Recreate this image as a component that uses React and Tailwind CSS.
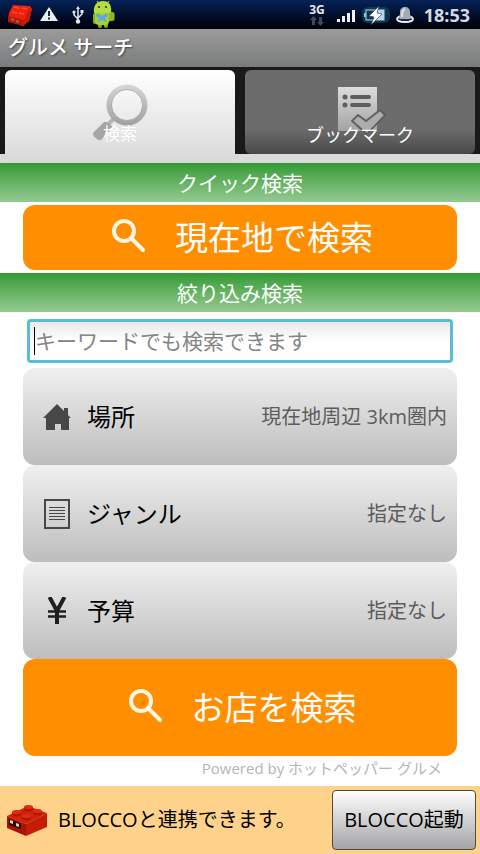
// App.jsx
import React, { useState } from 'react';

const AndroidIcon = () => (
  <svg width="26" height="29" viewBox="0 0 26 29" aria-hidden="true">
    <path d="M7 4L5 1M15 4L17 1" stroke="#9cc52c" strokeWidth="1.2" />
    <rect x="6" y="20" width="4" height="8" rx="2" fill="#86ad1f" />
    <rect x="12" y="20" width="4" height="8" rx="2" fill="#86ad1f" />
    <path d="M16 12l6 1v7l-5 1z" fill="#8fb526" stroke="#8fb526" strokeLinejoin="round" />
    <rect x="1" y="13" width="4" height="11" rx="2" fill="#86ad1f" />
    <rect x="3" y="10" width="14" height="15" rx="4" fill="#a8d033" />
    <path d="M2 13C1 5 5 1 11 1s9 4 8 12z" fill="#b5dc42" />
    <circle cx="7" cy="7" r="1.1" fill="#31420d" />
    <circle cx="14" cy="7" r="1.1" fill="#31420d" />
    <path d="M5 13l5 3 5-3 1 3-3 2 2 4-5-2-5 2 2-4-3-2z" fill="#5fa6e8" />
  </svg>
);

const StatusBrickIcon = () => (
  <svg width="26" height="26" viewBox="0 0 26 26" aria-hidden="true">
    <path d="M7 3l17 1 2 3-3 12-6 5L2 18l1-7z" fill="#f0200e" />
    <path d="M2 14l16 4-1 6-15-4z" fill="#b51709" />
    <path d="M18 18l6-12 2 1-3 12-6 5z" fill="#c81a0b" />
    <path d="M8 5l5 1M16 6l5 1M6 10l5 1M13 11l5 1" stroke="#ff4a34" strokeWidth="1.500" />
    <path d="M5 17l3 1M10 19l3 1" stroke="#8a7a35" strokeWidth="2" />
  </svg>
);

const WarningIcon = () => (
  <svg width="18" height="15" viewBox="0 0 18 15" aria-hidden="true">
    <path d="M9 0l9 14H0z" fill="#e8eef4" />
    <path d="M9 4v5M9 10.5v2" stroke="#14233f" strokeWidth="2" />
  </svg>
);

const UsbIcon = () => (
  <svg width="12" height="18" viewBox="0 0 12 18" fill="none" stroke="#dfe7f0" strokeWidth="1.500" aria-hidden="true">
    <path d="M6 2v13M2 6v3l4 4M10 6v2l-4 4" />
    <path d="M6 0l2 3H4z" fill="#dfe7f0" stroke="none" />
    <circle cx="6" cy="15.500" r="2.200" fill="#dfe7f0" stroke="none" />
    <circle cx="2" cy="6" r="1.600" fill="#dfe7f0" stroke="none" />
    <path d="M8.500 4h3v3h-3z" fill="#dfe7f0" stroke="none" />
  </svg>
);

const DataArrowsIcon = () => (
  <svg width="14" height="10" viewBox="0 0 14 10" fill="#3f4858" aria-hidden="true">
    <path d="M3.500 0L7 4H5v5H2V4H0z" />
    <path d="M10.500 10L14 6h-2V1H9v5H7z" />
  </svg>
);

const SignalIcon = () => (
  <svg width="19" height="14" viewBox="0 0 19 14" fill="#eef2f7" aria-hidden="true">
    <path d="M0 11h3v3H0zM5 8h3v6H5zM10 5h3v9h-3zM15 2h3v12h-3z" />
  </svg>
);

const BatteryIcon = () => (
  <svg width="28" height="22" viewBox="0 0 28 22" aria-hidden="true">
    <rect x="0" y="3" width="28" height="16" rx="6" fill="#1d5a78" opacity="0.500" />
    <rect x="4" y="6" width="18" height="10" fill="#14344f" stroke="#8cc8cc" strokeWidth="1.200" />
    <path d="M14 6h8v10h-8z" fill="#b9d4e8" />
    <path d="M2 9h2v4H2z" fill="#8cc8cc" />
    <path d="M17 2L7 12l5 1-3 8 11-11-5-1z" fill="#ffffff" stroke="#1b3350" strokeWidth="0.600" />
  </svg>
);

const BellIcon = () => (
  <svg width="18" height="18" viewBox="0 0 18 18" aria-hidden="true">
    <ellipse cx="9" cy="13" rx="8" ry="3" fill="#0b1730" stroke="#eef1f4" strokeWidth="1.800" />
    <path d="M2 12c2-2 2-3 2-6 0-3 2-5 5-5s5 2 5 5c0 3 0 4 2 6-3 2-11 2-14 0z" fill="#a6abb2" />
    <path d="M6 11c0-4 0-7 3-8" stroke="#dfe2e6" strokeWidth="2" fill="none" />
    <path d="M5 14h8" stroke="#10203c" strokeWidth="1.500" />
  </svg>
);

const TabSearchIcon = () => (
  <svg width="56" height="58" viewBox="0 0 56 58" aria-hidden="true">
    <defs>
      <linearGradient id="ring" x1="0" y1="0" x2="0" y2="1">
        <stop offset="0" stopColor="#d4d4d4" />
        <stop offset="1" stopColor="#a3a3a3" />
      </linearGradient>
    </defs>
    <path d="M22 34l-6 7" stroke="#b4b4b4" strokeWidth="4" />
    <path d="M15 38l6 5-12 13c-3 1-9-4-8-7l11-11z" fill="#a6a6a6" />
    <circle cx="35" cy="21" r="18" fill="none" stroke="url(#ring)" strokeWidth="5" />
    <circle cx="35" cy="21" r="15.500" fill="none" stroke="#9a9a9a" strokeWidth="0.700" />
  </svg>
);

const TabBookmarkIcon = () => (
  <svg width="48" height="48" viewBox="0 0 48 48" aria-hidden="true">
    <defs>
      <linearGradient id="sheet" x1="0" y1="0" x2="0" y2="1">
        <stop offset="0" stopColor="#dcdcdc" />
        <stop offset="1" stopColor="#a2a2a2" />
      </linearGradient>
    </defs>
    <path d="M0 0h39v44H0z" fill="url(#sheet)" />
    <circle cx="7" cy="10" r="2.500" fill="#5e5e5e" />
    <circle cx="7" cy="18" r="2.500" fill="#5e5e5e" />
    <path d="M14 10h17M14 18h17" stroke="#5e5e5e" strokeWidth="4" strokeLinecap="round" />
    <path d="M14 34l6-6 8 6 14-11 5 5-18 19z" fill="#acacac" stroke="#5c5d5c" strokeWidth="1.800" strokeLinejoin="round" />
  </svg>
);

const SearchIcon = () => (
  <svg className="mb-1 shrink-0" width="36" height="36" viewBox="0 0 36 36" fill="none" stroke="#fff6e8" aria-hidden="true">
    <circle cx="13" cy="13" r="10" strokeWidth="4" />
    <path d="M20 20l12 12" strokeWidth="4" strokeLinecap="round" />
  </svg>
);

const HomeIcon = () => (
  <svg width="28" height="26" viewBox="0 0 28 26" fill="#474747" aria-hidden="true">
    <path d="M14 0l7 7V4h4v7l3 3h-2v12h-8v-6h-6v6H3V14H0z" />
  </svg>
);

const ListIcon = () => (
  <svg width="26" height="30" viewBox="0 0 26 30" fill="none" stroke="#474747" aria-hidden="true">
    <rect x="1" y="1" width="24" height="28" strokeWidth="2" />
    <path d="M5 8.500h16M5 11.500h16M5 14.500h16M5 17.500h16M5 20.500h16" strokeWidth="1" />
  </svg>
);

const YenIcon = () => (
  <svg width="20" height="27" viewBox="0 0 20 27" fill="none" stroke="#1f1f1f" aria-hidden="true">
    <path d="M2.500 0L10 14L17.500 0" strokeWidth="4" />
    <path d="M10 12v15" strokeWidth="4" />
    <path d="M1 14.500h18M1 19.500h18" strokeWidth="2.500" />
  </svg>
);

const BrickIcon = () => (
  <svg className="shrink-0" width="42" height="32" viewBox="0 0 42 32" aria-hidden="true">
    <path d="M1 12L22 2l19 7-21 11z" fill="#d42208" />
    <path d="M1 12l19 8v12L1 24z" fill="#a81306" />
    <path d="M20 20L41 9v14L20 32z" fill="#c41c05" />
    <path d="M6 8h9v3c-2 2-7 2-9 0zM18 3h9v3c-2 2-7 2-9 0zM16 12h9v3c-2 2-7 2-9 0zM27 7h9v3c-2 2-7 2-9 0z" fill="#b01804" />
    <g fill="#e02b10">
      <ellipse cx="10.500" cy="8" rx="4.500" ry="2" />
      <ellipse cx="22.500" cy="3" rx="4.500" ry="2" />
      <ellipse cx="20.500" cy="12" rx="4.500" ry="2" />
      <ellipse cx="31.500" cy="7" rx="4.500" ry="2" />
    </g>
    <path d="M3 15l12 5v5L3 21z" fill="#2b0e0b" />
    <path d="M4 16l3 1v3l-3-1zM10 19l3 1v3l-3-1z" fill="#e0cfc4" />
  </svg>
);

const tabs = [
  { id: 'search', label: '検索', icon: <TabSearchIcon /> },
  { id: 'bookmark', label: 'ブックマーク', icon: <TabBookmarkIcon /> }
];

const filters = [
  { id: 'place', label: '場所', value: '現在地周辺 3km圏内', icon: <HomeIcon /> },
  { id: 'genre', label: 'ジャンル', value: '指定なし', icon: <ListIcon /> },
  { id: 'budget', label: '予算', value: '指定なし', icon: <YenIcon /> }
];

const SectionTitle = ({ children }) => (
  <h2 className="flex h-[39px] items-center justify-center bg-linear-to-b from-[#2f9a31] to-[#94ca92] text-[21px] leading-6 text-white">
    {children}
  </h2>
);

const App = () => {
  const [activeTab, setActiveTab] = useState('search');
  const [keyword, setKeyword] = useState('');

  return (
    <div className="flex min-h-screen flex-col bg-white font-['Open_Sans','Noto_Sans_CJK_JP',sans-serif]" lang="ja">
      {/* Status bar */}
      <div className="flex h-[29px] items-center justify-between bg-linear-to-b from-[#06235a] to-[#000209] pr-2.5 pl-1.5">
        <div className="flex items-center">
          <StatusBrickIcon />
          <span className="ml-2"><WarningIcon /></span>
          <span className="ml-3.5"><UsbIcon /></span>
          <span className="ml-2"><AndroidIcon /></span>
        </div>
        <div className="flex items-center">
          <div className="flex flex-col items-center">
            <span className="text-[12px] leading-3 font-bold text-[#e4e9f0]">3G</span>
            <DataArrowsIcon />
          </div>
          <span className="ml-3"><SignalIcon /></span>
          <span className="ml-1.5"><BatteryIcon /></span>
          <span className="ml-1.5"><BellIcon /></span>
          <span className="ml-2.5 text-[18px] leading-6 font-bold text-[#d3dae3]">18:53</span>
        </div>
      </div>

      {/* Title bar */}
      <header className="flex h-[38px] items-center bg-linear-to-b from-[#9b9c9a] to-[#7a7b7d] px-2">
        <h1 className="text-[20px] leading-6 font-medium text-white text-shadow-[1px_1px_2px_#444444]">グルメ サーチ</h1>
      </header>

      {/* Tabs */}
      <div role="tablist" className="grid grid-cols-2 bg-linear-to-b from-[#181a19] from-[87px] to-[#dbdbdb] to-[87px] pt-[3px]">
        {tabs.map((tab) => (
          <div key={tab.id} className="px-[5px]">
            <button
              type="button"
              role="tab"
              aria-selected={activeTab === tab.id}
              onClick={() => setActiveTab(tab.id)}
              className={
                activeTab === tab.id
                  ? 'flex h-[93px] w-full flex-col items-center rounded-t-md bg-linear-to-b from-white to-[#d8d8d8] pt-3.5'
                  : 'mb-[9px] flex h-[84px] w-full flex-col items-center rounded-md bg-linear-to-b from-[#6b6c6b] from-70% to-[#4a4a4a] pt-[17px]'
              }
            >
              <span className={activeTab === tab.id ? 'flex h-10 justify-center' : 'flex h-10 justify-center pl-1'}>{tab.icon}</span>
              <span className={activeTab === tab.id ? 'relative text-[17px] leading-5 text-white' : 'relative -mt-0.5 text-[18px] leading-5 text-white'}>
                {tab.label}
              </span>
            </button>
          </div>
        ))}
      </div>

      <main className="flex-1">
        <SectionTitle>クイック検索</SectionTitle>
        <div className="px-[23px] py-[3px]">
          <button type="button" className="flex h-[65px] w-full items-center justify-center gap-7 rounded-xl bg-[#ff8e00] pl-1 text-[33px] leading-10 text-white">
            <SearchIcon />
            現在地で検索
          </button>
        </div>

        <SectionTitle>絞り込み検索</SectionTitle>
        <form className="px-[23px] pt-[7px]" onSubmit={(e) => e.preventDefault()}>
          <div className="relative mx-1 mb-[5px]">
            <input
              type="text"
              aria-label="キーワード"
              placeholder="キーワードでも検索できます"
              value={keyword}
              onChange={(e) => setKeyword(e.target.value)}
              className="block h-11 w-full rounded border-[3px] border-[#5abdd3] bg-linear-to-b from-[#e9e9e9] to-white to-50% px-[5px] text-[21px] leading-7 text-black outline-none placeholder:text-[#858585]"
            />
            {keyword === '' && <span className="absolute top-2 left-[7px] h-7 w-px bg-black" />}
          </div>

          {filters.map((filter) => (
            <button
              key={filter.id}
              type="button"
              className="flex h-[97px] w-full items-center rounded-xl bg-linear-to-b from-[#f0f0f0] to-[#bebdbe] pr-2.5 pl-5"
            >
              <span className="flex w-7 justify-center">{filter.icon}</span>
              <span className="ml-4 text-[24px] leading-8 text-black">{filter.label}</span>
              <span className="ml-auto text-[20px] leading-7 text-[#5c5c5c]">{filter.value}</span>
            </button>
          ))}

          <button type="submit" className="flex h-[97px] w-full items-center justify-center gap-7 rounded-xl bg-[#ff8e00] pl-1 text-[33px] leading-10 text-white">
            <SearchIcon />
            お店を検索
          </button>
        </form>
        <p className="px-[38px] pb-1.5 text-right text-[15px] leading-6 text-[#b5b5b5]">Powered by ホットペッパー グルメ</p>
      </main>

      {/* Link to the BLOCCO app */}
      <footer className="flex h-[68px] items-center justify-between bg-[#ffd28c] pr-1 pl-1.5">
        <div className="flex items-center gap-2.5">
          <BrickIcon />
          <p className="text-[20px] leading-7 text-black">BLOCCOと連携できます。</p>
        </div>
        <button type="button" className="h-[60px] w-36 rounded border border-[#55493c] bg-linear-to-b from-white to-[#a5a5a9] text-[20px] leading-7 whitespace-nowrap text-black">
          BLOCCO起動
        </button>
      </footer>
    </div>
  );
};

export default App;
